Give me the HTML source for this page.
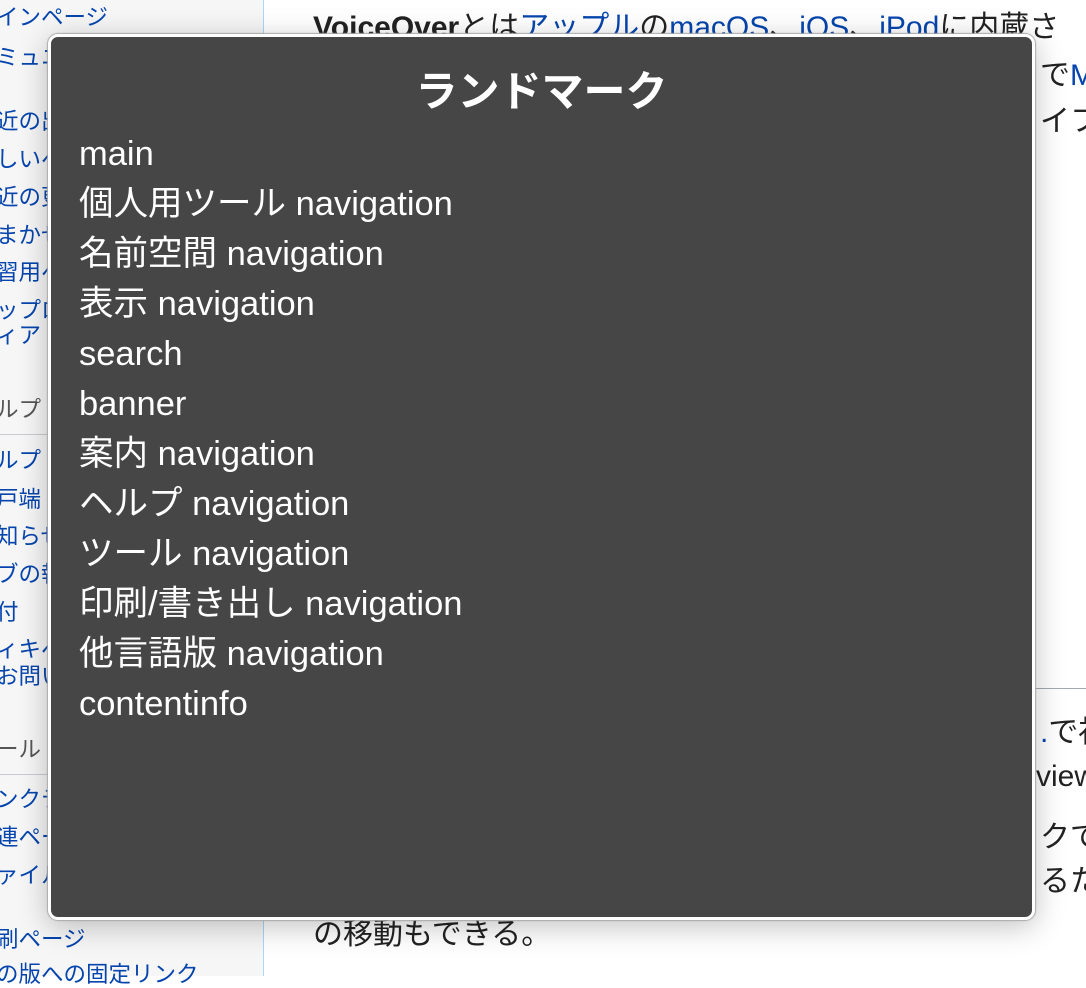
<!DOCTYPE html>
<html><head><meta charset="utf-8"><style>
body{margin:0;width:1086px;height:976px;overflow:hidden;background:#fff;font-family:"Liberation Sans","Noto Sans CJK JP",sans-serif;position:relative}
.side{position:absolute;left:0;top:0;width:263px;height:976px;background:#f6f6f6;border-right:1px solid #a7d7f9}
.s{position:absolute;left:-4px;font-size:22.5px;color:#0645ad;white-space:nowrap;line-height:26px}
.h{color:#555}
.ln{position:absolute;left:0;width:262px;height:1px;background:#c8ccd1}
.m{position:absolute;font-size:30px;color:#222;white-space:nowrap;line-height:32px}
.a{color:#0645ad}
.pop{position:absolute;left:48px;top:34px;width:981px;height:880px;background:#464646;border:3px solid #fff;border-radius:10px;box-shadow:0 0 1px 1px #aaa,0 6px 30px rgba(0,0,0,.25)}
.t{position:absolute;left:0;width:100%;top:31px;text-align:center;color:#fff;font-weight:bold;font-size:42px;line-height:48px}
.i{position:absolute;left:28px;color:#fff;font-size:34.5px;line-height:40px;white-space:nowrap}
</style></head><body>
<div class="side">
<div class="s" style="top:5px">インページ</div>
<div class="s" style="top:45px">ミュニ</div>
<div class="s" style="top:109px">近の出</div>
<div class="s" style="top:147px">しいへ</div>
<div class="s" style="top:185px">近の更</div>
<div class="s" style="top:223px">まかせ</div>
<div class="s" style="top:260px">習用へ</div>
<div class="s" style="top:298px">ップロ</div>
<div class="s" style="top:323px">ィア</div>
<div class="s h" style="top:397px">ルプ</div>
<div class="ln" style="top:434px"></div>
<div class="s" style="top:448px">ルプ</div>
<div class="s" style="top:487px">戸端</div>
<div class="s" style="top:524px">知らせ</div>
<div class="s" style="top:562px">ブの報</div>
<div class="s" style="top:600px">付</div>
<div class="s" style="top:637px">ィキペ</div>
<div class="s" style="top:664px">お問い</div>
<div class="s h" style="top:737px">ール</div>
<div class="ln" style="top:774px"></div>
<div class="s" style="top:787px">ンクテ</div>
<div class="s" style="top:825px">連ペー</div>
<div class="s" style="top:863px">ァイル</div>
<div class="s" style="top:927px">刷ページ</div>
<div class="s" style="top:962px">の版への固定リンク</div>
</div>
<div class="m" style="left:313px;top:12px"><b>VoiceOver</b>とは<span class="a">アップル</span>の<span class="a">macOS</span>、<span class="a">iOS</span>、<span class="a">iPod</span>に内蔵さ</div>
<div class="m" style="left:1040px;top:60px">で<span class="a">M</span></div>
<div class="m" style="left:1040px;top:106px">イフ</div>
<div style="position:absolute;left:1035px;top:688px;width:51px;height:1px;background:#a2a9b1"></div>
<div class="m" style="left:1040px;top:717px"><span class="a">.</span>で視</div>
<div class="m" style="left:1036px;top:761px">view</div>
<div class="m" style="left:1040px;top:822px">クで</div>
<div class="m" style="left:1040px;top:866px">るた</div>
<div class="m" style="left:313px;top:919px">の移動もできる。</div>
<div class="pop">
<div class="t">ランドマーク</div>
<div class="i" style="top:97px">main</div>
<div class="i" style="top:147px">個人用ツール navigation</div>
<div class="i" style="top:197px">名前空間 navigation</div>
<div class="i" style="top:247px">表示 navigation</div>
<div class="i" style="top:297px">search</div>
<div class="i" style="top:347px">banner</div>
<div class="i" style="top:397px">案内 navigation</div>
<div class="i" style="top:447px">ヘルプ navigation</div>
<div class="i" style="top:497px">ツール navigation</div>
<div class="i" style="top:547px">印刷/書き出し navigation</div>
<div class="i" style="top:597px">他言語版 navigation</div>
<div class="i" style="top:647px">contentinfo</div>
</div>
</body></html>
